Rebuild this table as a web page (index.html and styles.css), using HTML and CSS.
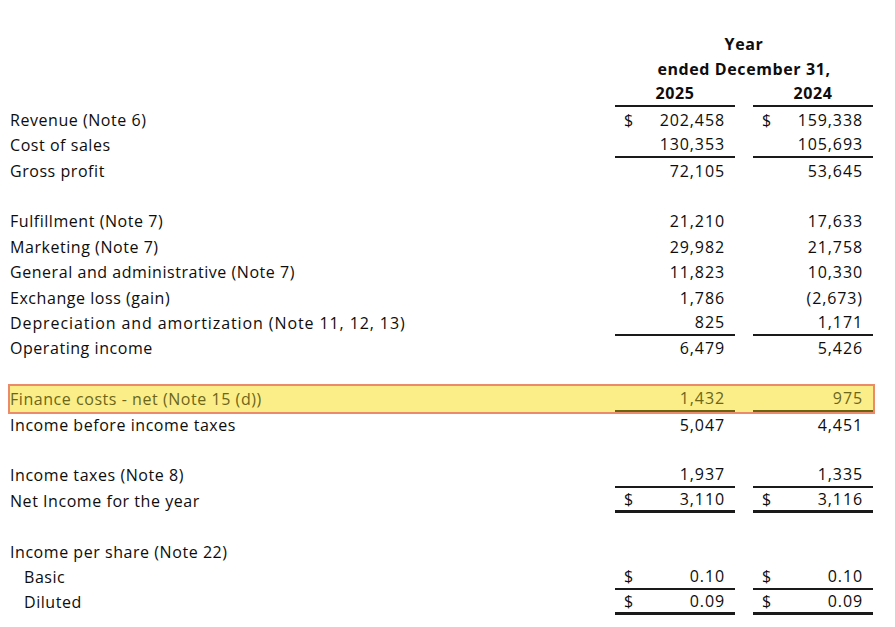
FILE: index.html
```html
<!DOCTYPE html>
<html>
<head>
<meta charset="utf-8">
<link rel="stylesheet" href="styles.css">
</head>
<body>
<div class="sheet">
  <div class="row head"><div class="label"></div><div class="span2">Year</div></div>
  <div class="row head"><div class="label"></div><div class="span2">ended December 31,</div></div>
  <div class="row head"><div class="label"></div><div class="val yr ul">2025</div><div class="val yr ul">2024</div></div>

  <div class="row"><div class="label">Revenue (Note 6)</div><div class="val"><span class="cur">$</span><span>202,458</span></div><div class="val"><span class="cur">$</span><span>159,338</span></div></div>
  <div class="row"><div class="label">Cost of sales</div><div class="val ul"><span>130,353</span></div><div class="val ul"><span>105,693</span></div></div>
  <div class="row"><div class="label">Gross profit</div><div class="val"><span>72,105</span></div><div class="val"><span>53,645</span></div></div>
  <div class="row blank"></div>

  <div class="row"><div class="label">Fulfillment (Note 7)</div><div class="val"><span>21,210</span></div><div class="val"><span>17,633</span></div></div>
  <div class="row"><div class="label">Marketing (Note 7)</div><div class="val"><span>29,982</span></div><div class="val"><span>21,758</span></div></div>
  <div class="row"><div class="label">General and administrative (Note 7)</div><div class="val"><span>11,823</span></div><div class="val"><span>10,330</span></div></div>
  <div class="row"><div class="label">Exchange loss (gain)</div><div class="val"><span>1,786</span></div><div class="val"><span>(2,673)</span></div></div>
  <div class="row"><div class="label wide">Depreciation and amortization (Note 11, 12, 13)</div><div class="val ul"><span>825</span></div><div class="val ul"><span>1,171</span></div></div>
  <div class="row"><div class="label">Operating income</div><div class="val"><span>6,479</span></div><div class="val"><span>5,426</span></div></div>
  <div class="row blank"></div>

  <div class="row hl"><div class="label">Finance costs - net (Note 15 (d))</div><div class="val ul"><span>1,432</span></div><div class="val ul"><span>975</span></div></div>
  <div class="row"><div class="label">Income before income taxes</div><div class="val"><span>5,047</span></div><div class="val"><span>4,451</span></div></div>
  <div class="row blank"></div>

  <div class="row"><div class="label">Income taxes (Note 8)</div><div class="val ul"><span>1,937</span></div><div class="val ul"><span>1,335</span></div></div>
  <div class="row"><div class="label">Net Income for the year</div><div class="val dul"><span class="cur">$</span><span>3,110</span></div><div class="val dul"><span class="cur">$</span><span>3,116</span></div></div>
  <div class="row blank"></div>

  <div class="row"><div class="label">Income per share (Note 22)</div></div>
  <div class="row"><div class="label sub">Basic</div><div class="val ul"><span class="cur">$</span><span>0.10</span></div><div class="val ul"><span class="cur">$</span><span>0.10</span></div></div>
  <div class="row"><div class="label sub">Diluted</div><div class="val dul"><span class="cur">$</span><span>0.09</span></div><div class="val dul"><span class="cur">$</span><span>0.09</span></div></div>
</div>
</body>
</html>
```

FILE: styles.css
```css
html, body {
  margin: 0;
  padding: 0;
  background: #ffffff;
}
body {
  font-family: "Open Sans", "Noto Sans", sans-serif;
  font-size: 16px;
  color: #0d0d0d;
}
.sheet {
  padding: 31px 22px 0 10px;
  display: flex;
  flex-direction: column;
}
.row {
  display: grid;
  grid-template-columns: 1fr 120px 120px;
  column-gap: 18px;
  height: 25.4px;
  align-items: stretch;
}
.label {
  display: flex;
  align-items: center;
  white-space: nowrap;
  letter-spacing: 0.55px;
}
.label.wide {
  letter-spacing: 0.9px;
}
.label.sub {
  padding-left: 14px;
}
.span2 {
  grid-column: 2 / 4;
  display: flex;
  align-items: center;
  justify-content: center;
  font-weight: 700;
  letter-spacing: 0.6px;
}
.val {
  display: flex;
  align-items: center;
  justify-content: flex-end;
  padding: 0 10px 0 9px;
  box-sizing: border-box;
  letter-spacing: 0.9px;
}
.val .cur {
  margin-right: auto;
  letter-spacing: 0;
}
.val.yr {
  justify-content: center;
  font-weight: 700;
  padding: 0;
  letter-spacing: 0.6px;
}
.ul {
  border-bottom: 2px solid #1a1a1a;
}
.dul {
  border-bottom: 3px solid #1a1a1a;
}
.row.hl {
  background: #fbee88;
  outline: 2px solid #ec8a6c;
  color: #6b661a;
}
.row.hl .ul {
  border-bottom-color: #6b6214;
}
```
